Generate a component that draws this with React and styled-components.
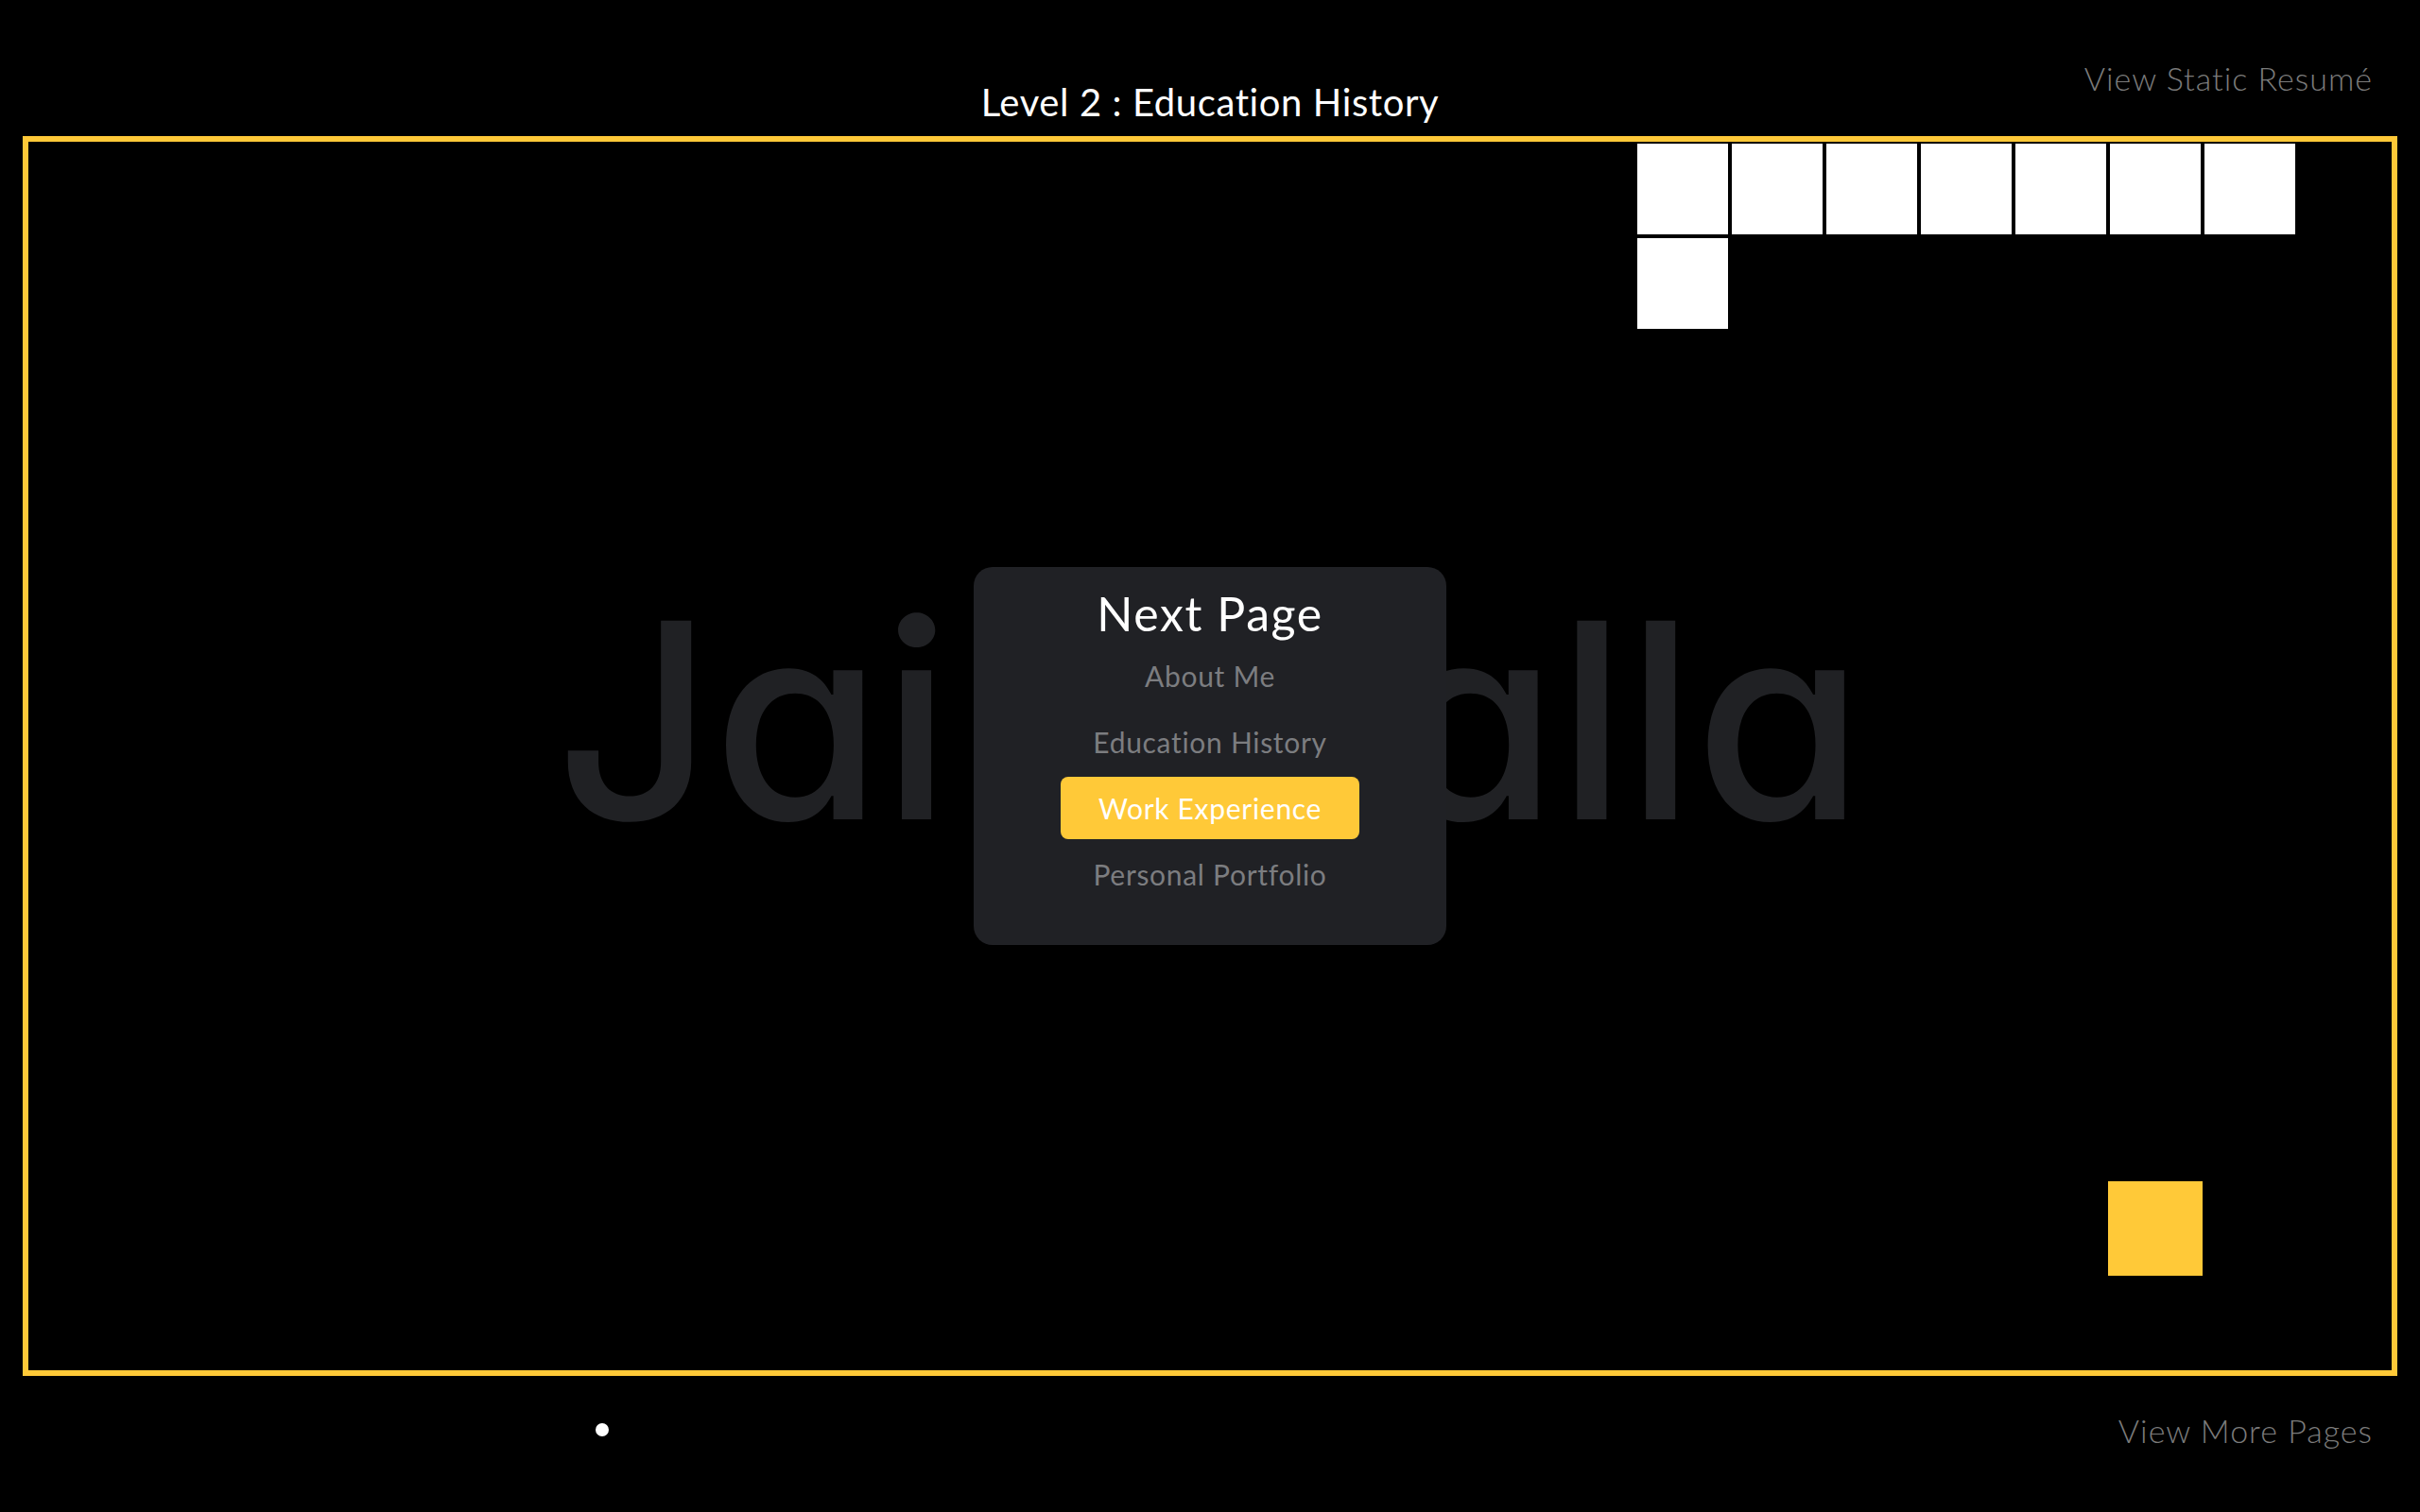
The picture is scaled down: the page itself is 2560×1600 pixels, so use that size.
import React from "react";
import styled, { createGlobalStyle } from "styled-components";

const YELLOW = "#ffc938";

const Global = createGlobalStyle`
  html, body { margin: 0; padding: 0; background: #000; }
  body { font-family: "Lato", "Noto Sans", sans-serif; color: #fff; }
  #root { min-height: 1600px; }
`;

const Page = styled.div`
  width: 2560px;
  height: 1600px;
  background: #000;
  display: flex;
  flex-direction: column;
  overflow: hidden;
`;

const Header = styled.header`
  height: 144px;
  display: grid;
  grid-template-columns: 1fr auto 1fr;
  padding: 0 50px;
  box-sizing: border-box;
`;

const LevelTitle = styled.h1`
  grid-column: 2;
  align-self: end;
  margin: 0 0 12px;
  font-size: 40px;
  line-height: 48px;
  font-weight: 400;
  color: #fff;
  letter-spacing: 0.6px;
`;

const TopLink = styled.a`
  grid-column: 3;
  justify-self: end;
  align-self: start;
  margin-top: 62px;
  font-size: 34px;
  line-height: 41px;
  font-weight: 300;
  letter-spacing: 1px;
  color: #7b7b7b;
  text-decoration: none;
  cursor: pointer;
`;

const Board = styled.main`
  margin: 0 24px;
  border: 6px solid ${YELLOW};
  width: 2500px;
  height: 1300px;
`;

const Grid = styled.div`
  display: grid;
  grid-template-columns: repeat(25, 100px);
  grid-template-rows: repeat(13, 100px);
  width: 2500px;
  height: 1300px;
`;

const Name = styled.div`
  grid-column: 1 / -1;
  grid-row: 1 / -1;
  place-self: center;
  margin-bottom: 76px;
  font-family: "Inter", "Lato", sans-serif;
  font-feature-settings: "cv11" 1;
  font-size: 289px;
  font-weight: 500;
  line-height: 1;
  color: #202124;
  letter-spacing: 0;
  white-space: nowrap;
  z-index: 0;
`;

const Segment = styled.div`
  grid-column: ${(p) => p.$col + 1};
  grid-row: ${(p) => p.$row + 1};
  margin: 2px;
  background: #fff;
  z-index: 1;
`;

const Food = styled.div`
  grid-column: ${(p) => p.$col + 1};
  grid-row: ${(p) => p.$row + 1};
  background: ${YELLOW};
  z-index: 1;
`;

const Footer = styled.footer`
  flex: 1;
  display: flex;
  justify-content: space-between;
  align-items: flex-start;
  padding: 37px 50px 0 630px;
`;

const Dot = styled.span`
  width: 14px;
  height: 14px;
  margin-top: 13px;
  border-radius: 50%;
  background: #fff;
`;

const BottomLink = styled(TopLink)`
  margin-top: 0;
`;

const Overlay = styled.div`
  position: fixed;
  inset: 0;
  display: flex;
  align-items: center;
  justify-content: center;
  pointer-events: none;
  z-index: 10;
`;

const Modal = styled.div`
  width: 500px;
  height: 400px;
  box-sizing: border-box;
  background: #202125;
  border-radius: 20px;
  padding: 19px 0 0;
  display: flex;
  flex-direction: column;
  align-items: center;
  pointer-events: auto;
`;

const ModalTitle = styled.h2`
  margin: 0 0 3px;
  font-size: 50px;
  line-height: 60px;
  font-weight: 400;
  letter-spacing: 1.6px;
  color: #fff;
`;

const Menu = styled.ul`
  list-style: none;
  margin: 0;
  padding: 0;
  display: flex;
  flex-direction: column;
  align-items: center;
  gap: 4px;
`;

const MenuItem = styled.li`
  padding: 15px 40px;
  font-size: 30px;
  line-height: 36px;
  font-weight: 400;
  letter-spacing: 0.7px;
  border-radius: 8px;
  color: ${(p) => (p.$active ? "#fff" : "#7c7d80")};
  background: ${(p) => (p.$active ? YELLOW : "transparent")};
  cursor: pointer;
`;

const snake = [
  [17, 0], [18, 0], [19, 0], [20, 0], [21, 0], [22, 0], [23, 0],
  [17, 1],
];

const pages = ["About Me", "Education History", "Work Experience", "Personal Portfolio"];

export default function App() {
  return (
    <Page>
      <Global />
      <Header>
        <LevelTitle>Level 2 : Education History</LevelTitle>
        <TopLink>View Static Resumé</TopLink>
      </Header>
      <Board>
        <Grid>
          <Name aria-hidden="true">Jai Challa</Name>
          {snake.map(([c, r]) => (
            <Segment key={`${c}-${r}`} $col={c} $row={r} />
          ))}
          <Food $col={22} $row={11} />
        </Grid>
      </Board>
      <Footer>
        <Dot />
        <BottomLink>View More Pages</BottomLink>
      </Footer>
      <Overlay>
        <Modal>
          <ModalTitle>Next Page</ModalTitle>
          <Menu>
            {pages.map((p) => (
              <MenuItem key={p} $active={p === "Work Experience"}>
                {p}
              </MenuItem>
            ))}
          </Menu>
        </Modal>
      </Overlay>
    </Page>
  );
}
